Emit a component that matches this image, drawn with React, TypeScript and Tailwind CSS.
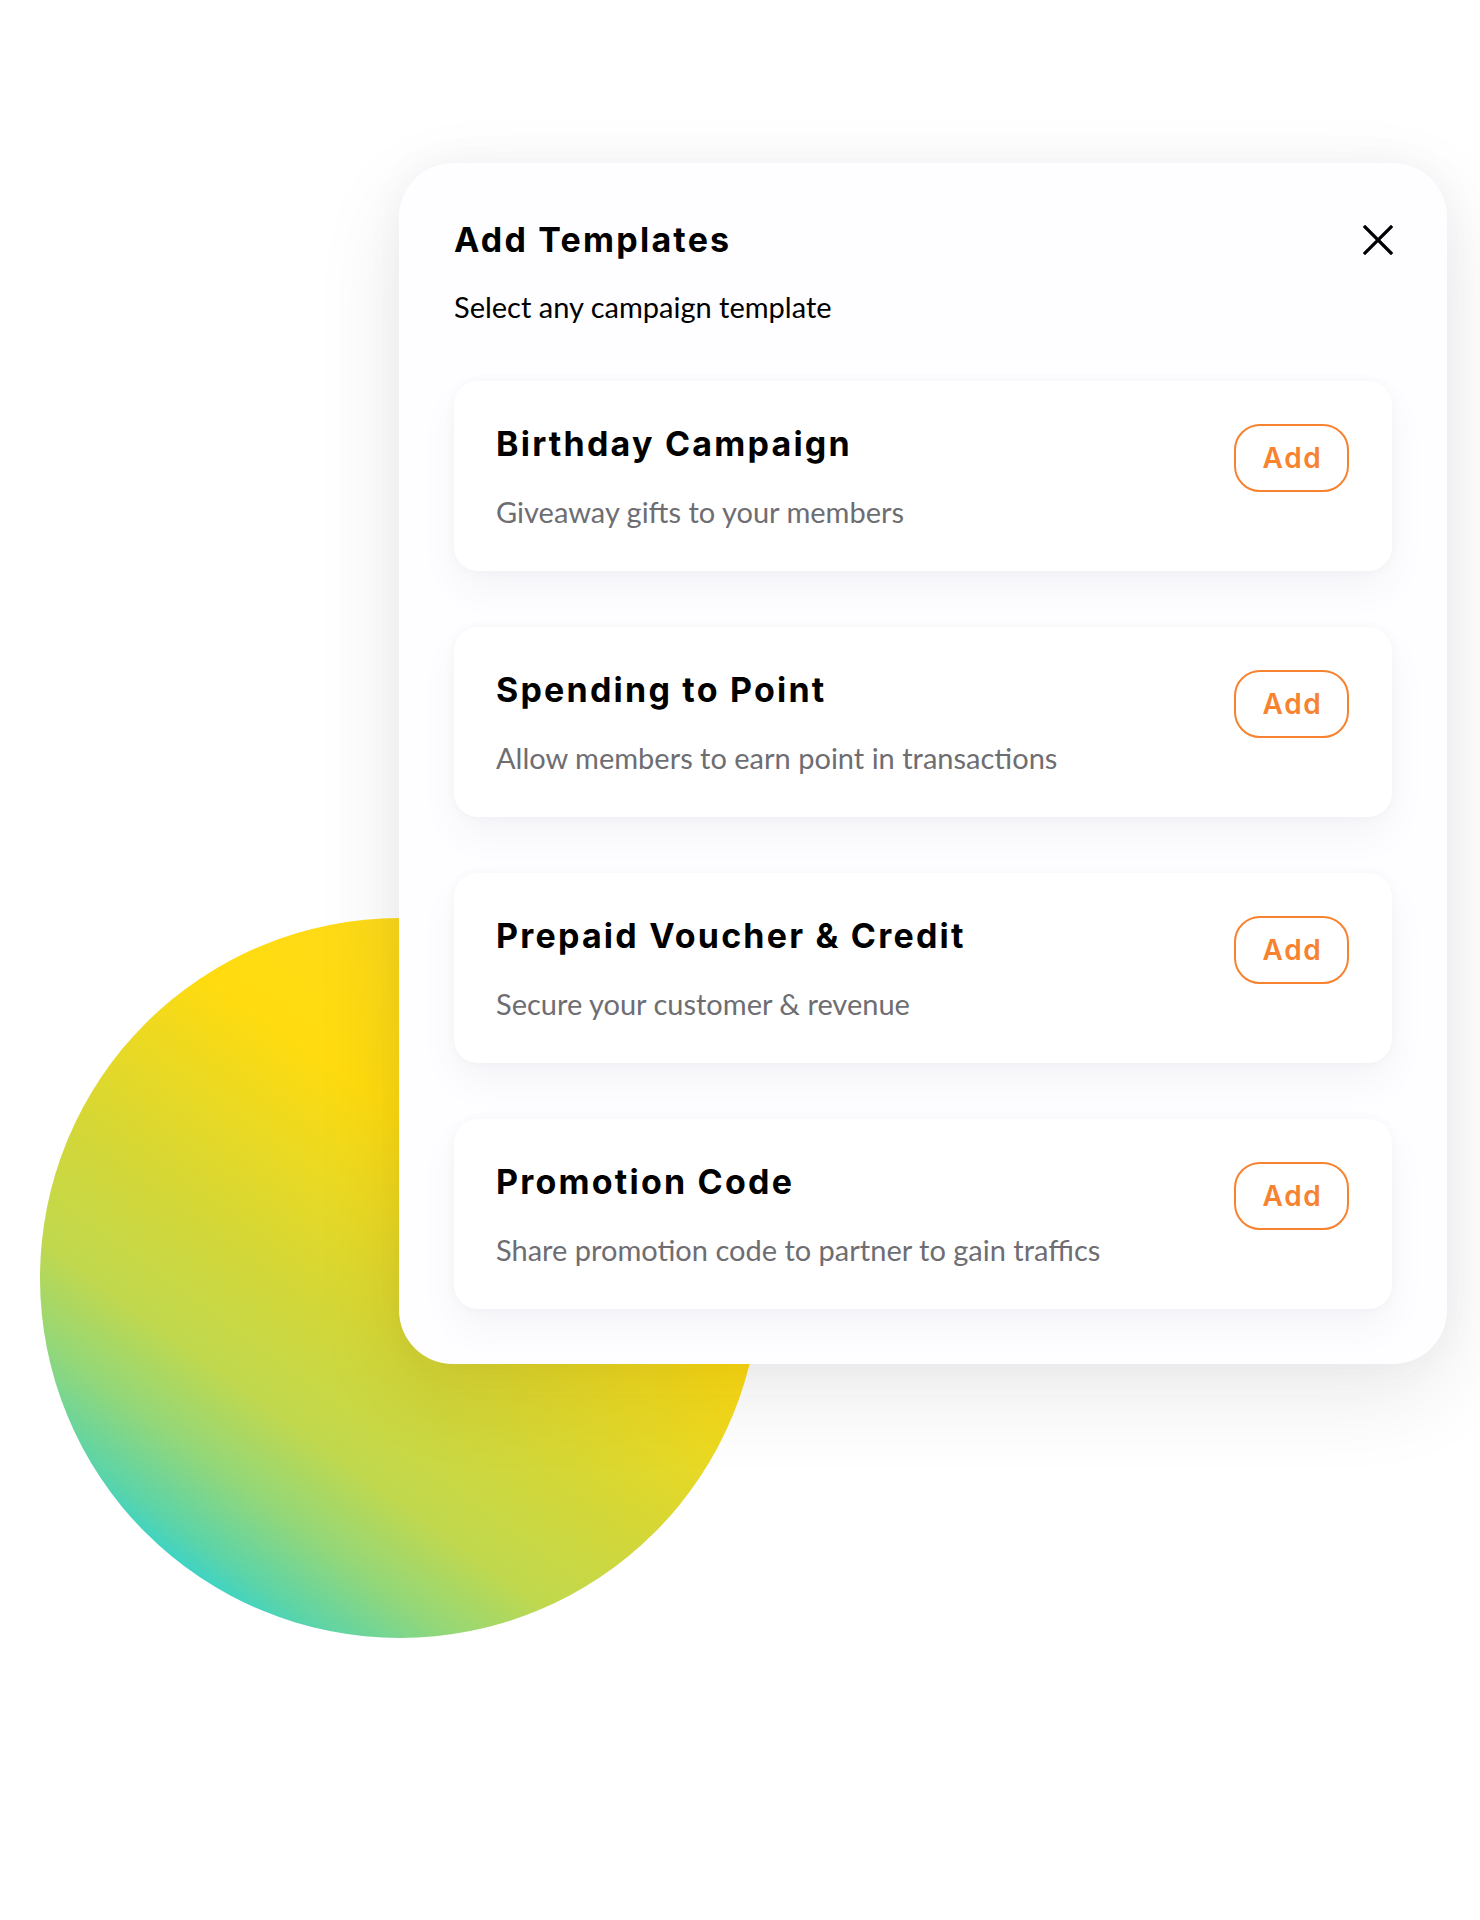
import React from "react";

type Template = {
  title: string;
  description: string;
};

const templates: Template[] = [
  { title: "Birthday Campaign", description: "Giveaway gifts to your members" },
  { title: "Spending to Point", description: "Allow members to earn point in transactions" },
  { title: "Prepaid Voucher & Credit", description: "Secure your customer & revenue" },
  { title: "Promotion Code", description: "Share promotion code to partner to gain traffics" },
];

const heading = "font-['Inter','Liberation_Sans',sans-serif]";
const body = "font-['Lato','Open_Sans',sans-serif]";

const TemplateCard: React.FC<{ item: Template }> = ({ item }) => (
  <div className="flex h-[190px] items-start justify-between rounded-[24px] bg-white pl-[42px] pr-[43px] pt-[42px] shadow-[0_18px_40px_rgba(30,20,60,0.045),0_0_12px_rgba(30,20,60,0.03)]">
    <div className="flex flex-col">
      <h3 className={`${heading} text-[34px] font-bold leading-[42px] tracking-[0.065em] text-black`}>
        {item.title}
      </h3>
      <p className={`${body} mt-[30px] text-[29px] leading-[34px] text-[#6e6d72]`}>
        {item.description}
      </p>
    </div>
    <button
      className={`${heading} mt-px flex h-[68px] w-[115px] items-center justify-center rounded-[26px] border-2 border-[#f7822f] pl-[2px] text-[28px] font-semibold tracking-[0.06em] text-[#f7822f]`}
    >
      Add
    </button>
  </div>
);

export default function App() {
  return (
    <div className="relative min-h-[1920px] w-[1480px] overflow-hidden bg-white">
      {/* gradient blob behind the dialog */}
      <div className="absolute left-[40px] top-[918px] h-[720px] w-[720px] rounded-full bg-[linear-gradient(36deg,#1fd3e4_11%,#5cd4a8_17%,#93d779_24%,#c0d84e_32%,#d5d736_44%,#ebd922_54%,#ffdb0f_63%,#fdda1c_84%,#f4d84a_100%)]" />

      <div className="relative ml-[399px] pt-[163px]">
        <div className="flex w-[1048px] flex-col rounded-[54px] bg-[#fefdff] px-[55px] pb-[55px] pt-[55px] shadow-[0_30px_90px_rgba(20,20,40,0.09),0_0_40px_rgba(20,20,40,0.04)]">
          <div className="flex items-center justify-between">
            <h2 className={`${heading} text-[34px] font-bold leading-[44px] tracking-[0.065em] text-black`}>
              Add Templates
            </h2>
            <button className="mr-[-1px] flex h-[30px] w-[30px] items-center justify-center">
              <svg width="30" height="30" viewBox="0 0 30 30" fill="none">
                <path d="M2 2L28 28M28 2L2 28" stroke="#000" strokeWidth="3.2" strokeLinecap="square" />
              </svg>
            </button>
          </div>
          <p className={`${body} mt-[29px] text-[29px] leading-[32px] text-black`}>
            Select any campaign template
          </p>

          <div className="mt-[58px] flex flex-col gap-[56px]">
            {templates.map((t) => (
              <TemplateCard key={t.title} item={t} />
            ))}
          </div>
        </div>
      </div>
    </div>
  );
}
